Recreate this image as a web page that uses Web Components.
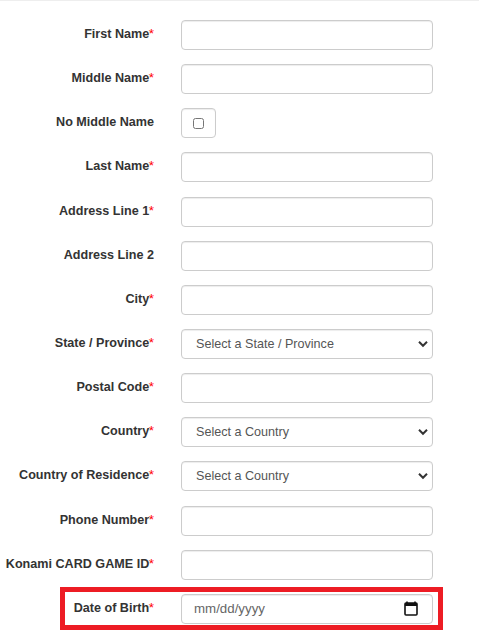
<!DOCTYPE html>
<html>
<head>
<meta charset="utf-8">
<title>Registration</title>
<style>
  html, body { margin: 0; padding: 0; background: #fff; }
  body { font-family: "Liberation Sans", Arial, sans-serif; min-height: 641px; }
</style>
</head>
<body>
<reg-form>
  <form-row label="First Name" required><text-field></text-field></form-row>
  <form-row label="Middle Name" required><text-field></text-field></form-row>
  <form-row label="No Middle Name"><check-field></check-field></form-row>
  <form-row label="Last Name" required><text-field></text-field></form-row>
  <form-row label="Address Line 1" required><text-field></text-field></form-row>
  <form-row label="Address Line 2"><text-field></text-field></form-row>
  <form-row label="City" required><text-field></text-field></form-row>
  <form-row label="State / Province" required><select-field placeholder="Select a State / Province"></select-field></form-row>
  <form-row label="Postal Code" required><text-field></text-field></form-row>
  <form-row label="Country" required><select-field placeholder="Select a Country"></select-field></form-row>
  <form-row label="Country of Residence" required><select-field placeholder="Select a Country"></select-field></form-row>
  <form-row label="Phone Number" required><text-field></text-field></form-row>
  <form-row label="Konami CARD GAME ID" required><text-field></text-field></form-row>
  <form-row label="Date of Birth" required highlight><date-field></date-field></form-row>
</reg-form>

<script>
const fieldBox = `
  box-sizing: border-box;
  width: 100%;
  height: 30px;
  border: 1px solid #ccc;
  border-radius: 4px;
  background: #fff;
  color: #555;
  font: 13.3px "Liberation Sans", Arial, sans-serif;
  box-shadow: inset 0 1px 1px rgba(0,0,0,.075);
`;

class RegForm extends HTMLElement {
  constructor() {
    super();
    this.attachShadow({ mode: 'open' });
    this.shadowRoot.innerHTML = `
    <style>
      :host { display: block; }
      hr { margin: 0 0 19px; border: 0; border-top: 1.5px solid #eee; }
      .rows { display: flex; flex-direction: column; gap: 14.15px; }
    </style>
    <hr>
    <div class="rows"><slot></slot></div>
    `;
  }
}

class FormRow extends HTMLElement {
  constructor() {
    super();
    this.attachShadow({ mode: 'open' });
  }

  connectedCallback() {
    const star = this.hasAttribute('required') ? '<span class="req">*</span>' : '';
    const box = this.hasAttribute('highlight') ? '<div class="box"></div>' : '';
    this.shadowRoot.innerHTML = `
    <style>
      :host { display: block; }
      .row { position: relative; display: grid; grid-template-columns: 154px 252px; column-gap: 27px; align-items: center; height: 30px; }
      label { text-align: right; font-size: 12.6px; line-height: 15px; font-weight: bold; color: #333; white-space: nowrap; margin-top: -1px; }
      .req { color: #f00; font-weight: normal; font-size: 13.5px; line-height: 0; margin-left: -0.5px; }
      .box { position: absolute; left: 60px; top: -7px; width: 383px; height: 43px; box-sizing: border-box; border: 5px solid #ed1c24; pointer-events: none; }
    </style>
    <div class="row">
      <label>${this.getAttribute('label')}${star}</label>
      <div><slot></slot></div>
      ${box}
    </div>
    `;
  }
}

class TextField extends HTMLElement {
  constructor() {
    super();
    this.attachShadow({ mode: 'open' });
    this.shadowRoot.innerHTML = `
    <style>
      :host { display: block; }
      input { ${fieldBox} display: block; padding: 0 14px; outline: none; }
    </style>
    <input type="text">
    `;
  }
}

class CheckField extends HTMLElement {
  constructor() {
    super();
    this.attachShadow({ mode: 'open' });
    this.shadowRoot.innerHTML = `
    <style>
      :host { display: block; }
      .wrap { ${fieldBox} width: 35px; display: flex; align-items: center; justify-content: center; }
      input { width: 11px; height: 11px; margin: 1px 0 0; }
    </style>
    <div class="wrap"><input type="checkbox"></div>
    `;
  }
}

class SelectField extends HTMLElement {
  constructor() {
    super();
    this.attachShadow({ mode: 'open' });
  }

  connectedCallback() {
    this.shadowRoot.innerHTML = `
    <style>
      :host { display: block; position: relative; }
      select { ${fieldBox} font-size: 12.6px; display: block; padding: 0 30px 0 14px; appearance: none; outline: none; }
      svg { position: absolute; right: 5px; top: 11px; width: 10px; height: 8px; pointer-events: none; }
    </style>
    <select><option>${this.getAttribute('placeholder')}</option></select>
    <svg viewBox="0 0 10 8"><path d="M1 1.8 5 5.8 9 1.8" fill="none" stroke="#333" stroke-width="2"/></svg>
    `;
  }
}

class DateField extends HTMLElement {
  constructor() {
    super();
    this.attachShadow({ mode: 'open' });
    this.shadowRoot.innerHTML = `
    <style>
      :host { display: block; }
      .wrap { ${fieldBox} color: #666; display: flex; align-items: center; justify-content: space-between; padding: 0 14px 0 12px; }
      svg { width: 14px; height: 15px; display: block; }
    </style>
    <div class="wrap">
      <span>mm/dd/yyyy</span>
      <svg viewBox="0 0 14 15"><path d="M3 0.5V2M11 0.5V2" stroke="#111" stroke-width="1.6"/><rect x="1" y="2" width="12" height="12" rx="1" fill="#fff" stroke="#111" stroke-width="1.6"/><rect x="1" y="2" width="12" height="3" fill="#111"/></svg>
    </div>
    `;
  }
}

customElements.define('reg-form', RegForm);
customElements.define('form-row', FormRow);
customElements.define('text-field', TextField);
customElements.define('check-field', CheckField);
customElements.define('select-field', SelectField);
customElements.define('date-field', DateField);
</script>
</body>
</html>
